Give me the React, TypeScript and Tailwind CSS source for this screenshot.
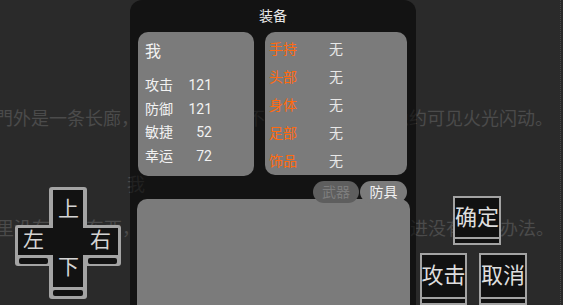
import type { ReactNode } from 'react'

const font = { fontFamily: "Roboto, 'Noto Sans CJK SC', sans-serif" }

const stats = [
  { label: '攻击', value: 121 },
  { label: '防御', value: 121 },
  { label: '敏捷', value: 52 },
  { label: '幸运', value: 72 },
]

const slots = ['手持', '头部', '身体', '足部', '饰品']

// 屏幕上的方块按键，底部带一条“台阶”
function GameKey({ label, className }: { label: string; className: string }) {
  return (
    <div className={`absolute flex flex-col border-2 border-[#a3a3a3] bg-[#111] ${className}`}>
      <div className="flex-1 flex items-center justify-center whitespace-nowrap text-[22px] leading-none text-[#dedede]">
        {label}
      </div>
      <div className="h-[6px] border-t-2 border-[#a3a3a3]" />
    </div>
  )
}

function DPad() {
  const labels: { text: string; cls: string }[] = [
    { text: '上', cls: 'left-[43px] top-[12px]' },
    { text: '左', cls: 'left-[8px] top-[43px]' },
    { text: '右', cls: 'left-[75px] top-[43px]' },
    { text: '下', cls: 'left-[43px] top-[70px]' },
  ]
  return (
    <div className="absolute left-[15px] top-[187px] w-[106px] h-[112px]">
      <svg width="106" height="112" viewBox="0 0 106 112" className="absolute inset-0">
        <rect x="34" y="0" width="38" height="112" rx="3" fill="#a4a4a4" />
        <rect x="0" y="38" width="106" height="41" rx="3" fill="#a4a4a4" />
        <rect x="38" y="3" width="30" height="97" fill="#121212" />
        <rect x="3" y="41" width="100" height="27" fill="#121212" />
        <rect x="4" y="71" width="29" height="6" rx="2" fill="#121212" />
        <rect x="73" y="71" width="29" height="6" rx="2" fill="#121212" />
        <rect x="38" y="103" width="30" height="6" rx="2" fill="#121212" />
      </svg>
      {labels.map(l => (
        <span
          key={l.text}
          className={`absolute text-[21px] leading-none text-[#d4d4d4] ${l.cls}`}
        >
          {l.text}
        </span>
      ))}
    </div>
  )
}

function Card({ className, children }: { className: string; children: ReactNode }) {
  return <div className={`rounded-[10px] bg-[#7b7b7b] ${className}`}>{children}</div>
}

export default function App() {
  return (
    <div className="relative w-[563px] h-[305px] overflow-hidden bg-[#2a2a2a]" style={font}>
      {/* 背景剧情文字 */}
      <div className="pt-[109px] text-[18px] leading-[20px] text-[#4b4b4b] whitespace-nowrap">
        <p className="-ml-[5px]">門外是一条长廊，两侧墙壁斑驳不堪，远处的尽头隐约可见火光闪动。</p>
        <p className="mt-[46px] pl-[127px]">我</p>
        <p className="mt-[24px] -ml-[22px]">这里没有什么东西，看来，除了沿着这条走廊继续往前进没有其他办法。</p>
      </div>

      <div className="absolute right-[2px] top-0 h-full border-l border-dotted border-[#4a4a4a]" />

      <DPad />
      <GameKey label="确定" className="left-[453px] top-[196px] w-[48px] h-[49px]" />
      <GameKey label="攻击" className="left-[420px] top-[253px] w-[47px] h-[52px]" />
      <GameKey label="取消" className="left-[479px] top-[253px] w-[48px] h-[52px]" />

      {/* 装备面板 */}
      <div className="absolute left-[130px] top-0 w-[286px] h-[330px] rounded-t-[12px] bg-black/55 flex flex-col">
        <div className="h-[32px] flex items-center justify-center text-[14px] text-[#e6e6e6]">
          装备
        </div>

        <div className="flex gap-[11px] pl-[8px]">
          <Card className="w-[116px] h-[144px] pl-[7px] pt-[12px] text-[#f2f2f2]">
            <div className="text-[16px] leading-[16px]">我</div>
            <div className="mt-[14px]">
              {stats.map(s => (
                <div key={s.label} className="h-[23.5px] w-[67px] flex items-center justify-between text-[14px]">
                  <span>{s.label}</span>
                  <span>{s.value}</span>
                </div>
              ))}
            </div>
          </Card>

          <Card className="w-[142px] h-[143px] pl-[4px] pt-[3px]">
            {slots.map(slot => (
              <div key={slot} className="h-[28px] flex items-center text-[14px]">
                <span className="w-[60px] text-[#ff6a10]">{slot}</span>
                <span className="text-[#e8e8e8]">无</span>
              </div>
            ))}
          </Card>
        </div>

        <div className="relative z-10 mt-[5px] pr-[9px] flex justify-end gap-[1px] text-[14px]">
          <div className="w-[46px] h-[22px] rounded-full bg-[#5e5e5e] text-[#7d7d7d] flex items-center justify-center">
            武器
          </div>
          <div className="w-[47px] h-[22px] rounded-full bg-[#7b7b7b] text-[#f0f0f0] flex items-center justify-center">
            防具
          </div>
        </div>

        <div className="-mt-[4px] ml-[7px] mr-[6px] flex-1 rounded-[10px] bg-[#7b7b7b]" />
      </div>
    </div>
  )
}
